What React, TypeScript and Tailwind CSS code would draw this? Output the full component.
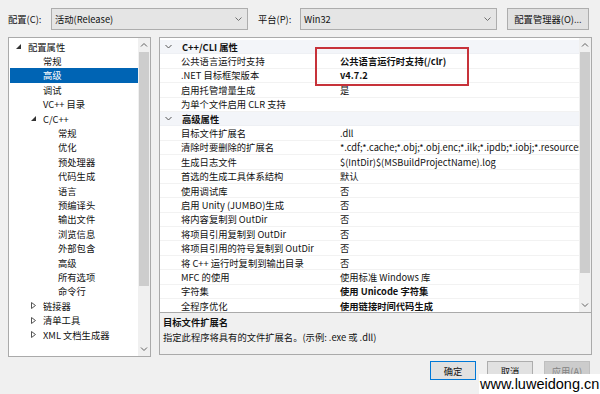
import React from "react";

const treeItems: { t: string; lvl: number; exp?: "open" | "closed"; sel?: boolean }[] = [
  { t: "配置属性", lvl: 0, exp: "open" },
  { t: "常规", lvl: 1 },
  { t: "高级", lvl: 1, sel: true },
  { t: "调试", lvl: 1 },
  { t: "VC++ 目录", lvl: 1 },
  { t: "C/C++", lvl: 1, exp: "open" },
  { t: "常规", lvl: 2 },
  { t: "优化", lvl: 2 },
  { t: "预处理器", lvl: 2 },
  { t: "代码生成", lvl: 2 },
  { t: "语言", lvl: 2 },
  { t: "预编译头", lvl: 2 },
  { t: "输出文件", lvl: 2 },
  { t: "浏览信息", lvl: 2 },
  { t: "外部包含", lvl: 2 },
  { t: "高级", lvl: 2 },
  { t: "所有选项", lvl: 2 },
  { t: "命令行", lvl: 2 },
  { t: "链接器", lvl: 1, exp: "closed" },
  { t: "清单工具", lvl: 1, exp: "closed" },
  { t: "XML 文档生成器", lvl: 1, exp: "closed" },
];

type Row = { h?: boolean; n: string; v?: string; b?: boolean };
const rows: Row[] = [
  { h: true, n: "C++/CLI 属性" },
  { n: "公共语言运行时支持", v: "公共语言运行时支持(/clr)", b: true },
  { n: ".NET 目标框架版本", v: "v4.7.2", b: true },
  { n: "启用托管增量生成", v: "是" },
  { n: "为单个文件启用 CLR 支持", v: "" },
  { h: true, n: "高级属性" },
  { n: "目标文件扩展名", v: ".dll" },
  { n: "清除时要删除的扩展名", v: "*.cdf;*.cache;*.obj;*.obj.enc;*.ilk;*.ipdb;*.iobj;*.resources;*.tlb;*.tli;*.tlh;*.tmp" },
  { n: "生成日志文件", v: "$(IntDir)$(MSBuildProjectName).log" },
  { n: "首选的生成工具体系结构", v: "默认" },
  { n: "使用调试库", v: "否" },
  { n: "启用 Unity (JUMBO)生成", v: "否" },
  { n: "将内容复制到 OutDir", v: "否" },
  { n: "将项目引用复制到 OutDir", v: "否" },
  { n: "将项目引用的符号复制到 OutDir", v: "否" },
  { n: "将 C++ 运行时复制到输出目录", v: "否" },
  { n: "MFC 的使用", v: "使用标准 Windows 库" },
  { n: "字符集", v: "使用 Unicode 字符集", b: true },
  { n: "全程序优化", v: "使用链接时间代码生成", b: true },
];

function Chevron({ up }: { up?: boolean }) {
  return (
    <svg width="8" height="5" viewBox="0 0 8 5">
      <polyline
        points={up ? "1,4.5 4,1.5 7,4.5" : "1,0.5 4,3.5 7,0.5"}
        fill="none"
        stroke="#606060"
        strokeWidth="1"
      />
    </svg>
  );
}

function Combo({ text }: { text: string }) {
  return (
    <div className="flex h-[22px] w-[197px] items-center justify-between border border-[#adadad] bg-[#e5e5e5] pl-[3px] pr-[5px]">
      <span>{text}</span>
      <svg width="7" height="4" viewBox="0 0 7 4">
        <polyline points="0.5,0.5 3.5,3.5 6.5,0.5" fill="none" stroke="#707070" strokeWidth="1" />
      </svg>
    </div>
  );
}

function Scrollbar({ thumbTop, thumbH }: { thumbTop: number; thumbH: number }) {
  return (
    <div className="relative flex h-full w-[12px] flex-col items-center justify-between bg-[#f0f0f0] py-[4px]">
      <Chevron up />
      <Chevron />
      <div className="absolute left-[1px] right-[1px] bg-[#cdcdcd]" style={{ top: thumbTop, height: thumbH }} />
    </div>
  );
}

export default function App() {
  return (
    <div className="relative h-[394px] w-[600px] overflow-hidden bg-[#f0f0f0] text-[9.3px] leading-[12px] text-[#111] font-['Noto_Sans_CJK_SC','Microsoft_YaHei',sans-serif]">
      {/* top bar */}
      <div className="flex items-center px-[8px] pt-[8px]">
        <span className="w-[43px]">配置(C):</span>
        <Combo text="活动(Release)" />
        <span className="ml-[10px] w-[42px]">平台(P):</span>
        <Combo text="Win32" />
        <div className="ml-[10px] flex h-[22px] w-[82px] items-center justify-center border border-[#adadad] bg-[#e1e1e1]">
          配置管理器(O)...
        </div>
      </div>

      {/* main */}
      <div className="mt-[7px] flex px-[8px]">
        {/* tree */}
        <div className="flex h-[320px] w-[143px] border border-[#aaaaaa] bg-white">
          <div className="flex-1 pl-[1px] pt-[1.5px]">
            {treeItems.map((it, i) => (
              <div
                key={i}
                className={`flex h-[14.4px] items-center ${it.sel ? "bg-[#0064b4] text-white" : ""}`}
                style={{ paddingLeft: it.lvl === 0 ? 6 : it.lvl === 1 ? 21 : 48 }}
              >
                {it.exp ? (
                  <span className="mr-[6px] flex w-[6px] items-center">
                    {it.exp === "open" ? (
                      <svg width="5" height="5" viewBox="0 0 5 5">
                        <polygon points="5,0 5,5 0,5" fill="#333" />
                      </svg>
                    ) : (
                      <svg width="5" height="7" viewBox="0 0 5 7">
                        <polygon points="0.5,0.5 4.5,3.5 0.5,6.5" fill="none" stroke="#555" strokeWidth="1" />
                      </svg>
                    )}
                  </span>
                ) : null}
                <span style={{ marginLeft: it.exp ? 0 : it.lvl === 1 ? 12 : 0 }}>{it.t}</span>
              </div>
            ))}
          </div>
          <Scrollbar thumbTop={14} thumbH={234} />
        </div>

        {/* right side */}
        <div className="ml-[8px] flex w-[433px] flex-col">
          <div className="flex h-[276px] border border-[#aaaaaa] bg-white">
            <div className="flex-1 overflow-hidden pt-[2px]">
              {rows.map((r, i) =>
                r.h ? (
                  <div key={i} className="flex h-[14.4px] items-center border-b border-[#eef0f4] bg-[#f3f5f9] font-bold">
                    <span className="ml-[5px] mr-[9px] flex w-[8px] items-center">
                      <svg width="7" height="5" viewBox="0 0 7 5">
                        <polyline points="0.5,1 3.5,4 6.5,1" fill="none" stroke="#555" strokeWidth="1" />
                      </svg>
                    </span>
                    <span>{r.n}</span>
                  </div>
                ) : (
                  <div key={i} className="flex h-[14.4px] items-center border-b border-[#f2f2f2]">
                    <span className="w-[180px] shrink-0 whitespace-nowrap pl-[21px]">{r.n}</span>
                    <span className={`whitespace-nowrap ${r.b ? "font-bold" : ""}`}>{r.v}</span>
                  </div>
                )
              )}
            </div>
            <Scrollbar thumbTop={14} thumbH={221} />
          </div>
          <div className="h-[42px] border border-t-0 border-[#aaaaaa] bg-[#f0f0f0] px-[3px] pt-[3px]">
            <div className="font-bold">目标文件扩展名</div>
            <div className="mt-[3px]">指定此程序将具有的文件扩展名。(示例: .exe 或 .dll)</div>
          </div>
          <div className="mt-[6px] flex justify-end gap-[11px] pr-[2px]">
            <div className="flex h-[19px] w-[46px] items-center justify-center border border-[#0078d7] bg-[#e1e1e1]">确定</div>
            <div className="flex h-[19px] w-[46px] items-center justify-center border border-[#adadad] bg-[#e1e1e1]">取消</div>
            <div className="flex h-[19px] w-[46px] items-center justify-center border border-[#bfbfbf] bg-[#cccccc] text-[#838383]">应用(A)</div>
          </div>
        </div>
      </div>

      {/* red highlight box */}
      <div className="absolute left-[315px] top-[47px] h-[39px] w-[154px] border-2 border-[#c7323a]" />

      {/* watermark */}
      <div className="absolute left-[479px] top-[374px] flex h-[20px] w-[121px] items-center bg-white pl-[1px] text-[14.5px] leading-[20px] font-['Liberation_Sans',sans-serif] text-black">
        www.luweidong.cn
      </div>
    </div>
  );
}
